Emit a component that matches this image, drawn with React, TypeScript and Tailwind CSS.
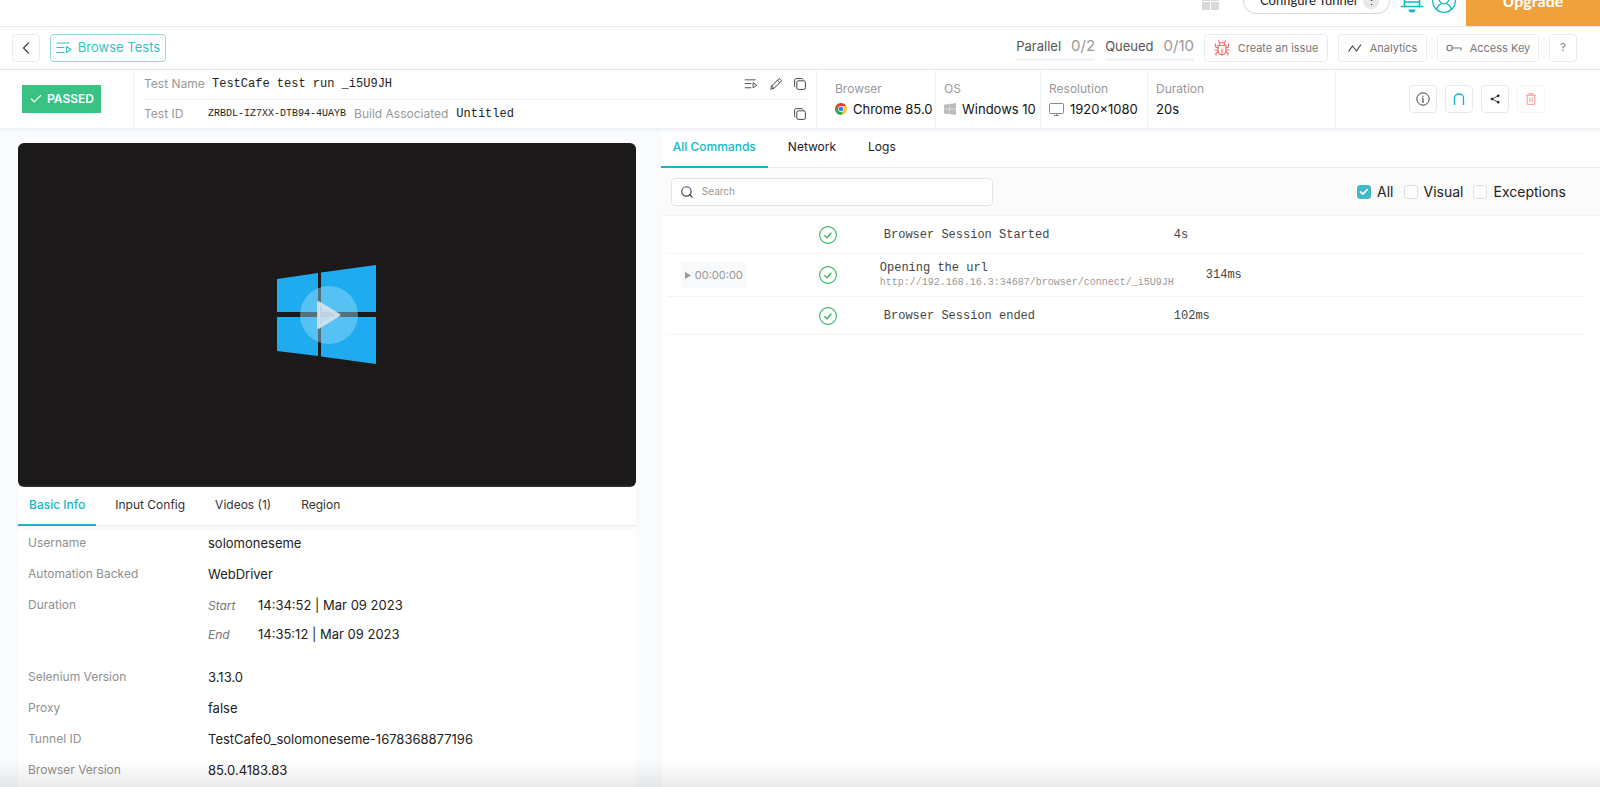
import React, { useState } from "react";
import { clsx } from "clsx";
import { Check, ChevronLeft, Search } from "lucide-react";

const INFO_TABS = ["Basic Info", "Input Config", "Videos (1)", "Region"];
const COMMAND_TABS = ["All Commands", "Network", "Logs"];

interface Command {
  title: string;
  duration: string;
  url?: string;
  time?: string;
}

const COMMANDS: Command[] = [
  { title: "Browser Session Started", duration: "4s" },
  {
    title: "Opening the url",
    url: "http://192.168.16.3:34687/browser/connect/_i5U9JH",
    time: "00:00:00",
    duration: "314ms",
  },
  { title: "Browser Session ended", duration: "102ms" },
];

const PlaylistIcon = ({ className }: { className?: string }) => (
  <svg viewBox="0 0 16 12" className={className} fill="none" stroke="currentColor" strokeWidth="1.1">
    <path d="M.5 1h13M.5 5.5h8M.5 10.5h8" />
    <path d="M10.5 4.5l4.5 3-4.5 3z" strokeLinejoin="round" />
  </svg>
);

const CopyIcon = () => (
  <svg viewBox="0 0 12 12" className="size-3" fill="none" stroke="currentColor" strokeWidth="1">
    <rect x="2.8" y="2.8" width="8.6" height="8.6" rx="1.6" />
    <path d="M1.4 9.2C.8 8.8.6 8.4.6 7.700V2.200C.6 1.200 1.200.6 2.200.6h5.500c.7 0 1.100.2 1.500.8" />
  </svg>
);

const PencilIcon = () => (
  <svg viewBox="0 0 12 12" className="size-3" fill="none" stroke="currentColor" strokeWidth="1" strokeLinejoin="round">
    <path d="M.8 11.200l.8-3.200L8.700.9c.4-.4 1-.4 1.400 0l1 1c.4.4.4 1 0 1.400L4 10.400z" />
    <path d="M7.400 2.200l2.400 2.400M1.600 8L4 10.400" />
  </svg>
);

const WindowsLogo = ({ className }: { className?: string }) => (
  <svg viewBox="0 0 99 99" className={className} fill="currentColor">
    <path d="M0 14L41 8v39H0zM44 7.500L99 0v47H44zM0 52h41v39L0 86zM44 52h55v47l-55-7.500z" />
  </svg>
);

const ChromeLogo = () => (
  <svg viewBox="0 0 24 24" className="size-3 shrink-0">
    <path d="M12 12L1.600 6A12 12 0 0 1 22.400 6z" fill="#e33b2e" />
    <path d="M12 12L22.400 6A12 12 0 0 1 12 24z" fill="#fcc934" />
    <path d="M12 12v12A12 12 0 0 1 1.600 6z" fill="#2da94f" />
    <path d="M12 6h10.400l-5.200 9z" fill="#fcc934" />
    <path d="M17.200 15L12 24l-5.200-9z" fill="#2da94f" />
    <path d="M6.800 15L1.600 6H12z" fill="#e33b2e" />
    <circle cx="12" cy="12" r="5.800" fill="#fff" />
    <circle cx="12" cy="12" r="4.600" fill="#3b7ded" />
  </svg>
);

const MonitorIcon = () => (
  <svg viewBox="0 0 15 13" className="h-[13px] w-[15px] shrink-0" fill="none" stroke="#888" strokeWidth="1">
    <rect x=".5" y=".5" width="14" height="10" rx="1" />
    <path d="M5 12.500h5M7.500 10.500v2" />
  </svg>
);

const BugIcon = () => (
  <svg viewBox="0 0 16 16" className="size-4" fill="none" stroke="#f4706c" strokeWidth="1.200" strokeLinecap="round">
    <path d="M4 5.500h8v5.300a4 4 0 0 1-8 0zM5.200 5.300a2.800 2.800 0 0 1 5.600 0M8 9v5.500" />
    <path d="M5.500 2.500L4.500 1M10.500 2.500l1-1.500M4 7.500H2L1.200 4M12 7.500h2l.8-3.500M4 10H.8M12 10h3.200M4.300 12L2 13v2M11.700 12l2.300 1v2" />
  </svg>
);

const KeyIcon = () => (
  <svg viewBox="0 0 16 8" className="h-2 w-4" fill="none" stroke="currentColor" strokeWidth="1.100">
    <circle cx="3.600" cy="4" r="2.700" />
    <path d="M6.300 4h8.700v2.500" />
  </svg>
);

const BellIcon = () => (
  <svg viewBox="0 0 24 24" className="size-6" fill="none" stroke="#12b7c4" strokeWidth="1.600">
    <path d="M4.500 17V9a7.500 7.500 0 0 1 15 0v8M5 13h14M1 17.500h22" />
    <path d="M8.500 20.500h7a3.500 3 0 0 1-7 0z" fill="#12b7c4" stroke="none" />
  </svg>
);

const AvatarIcon = () => (
  <svg viewBox="0 0 24 24" className="size-6" fill="none" stroke="#12b7c4" strokeWidth="1.300">
    <circle cx="12" cy="12" r="11.300" />
    <circle cx="12" cy="10" r="4.800" />
    <path d="M4.500 20.500c1-3.500 3.200-5.200 5-6M19.500 20.500c-1-3.500-3.200-5.200-5-6" />
  </svg>
);

const TopBar = () => (
  <header className="flex h-[27px] shrink-0 items-end overflow-hidden border-b border-[#e8e8e8]">
    <div className="flex h-[50px] flex-1 items-center justify-end">
      <div className="mr-6 grid grid-cols-2 gap-px">
        <span className="size-2 bg-[#d8d8d8]" />
        <span className="size-2 bg-[#d8d8d8]" />
        <span className="size-2 bg-[#d8d8d8]" />
        <span className="size-2 bg-[#d8d8d8]" />
      </div>
      <button className="mr-2.5 flex h-[26px] w-[147px] items-center justify-between rounded-full border border-[#d5d5d5] pr-2.5 pl-4 font-[Lato,sans-serif] text-[13px] text-[#222]">
        Configure Tunnel
        <span className="flex size-4 items-center justify-center rounded-full bg-[#e8e8e8] text-[11px]">⋮</span>
      </button>
      <button aria-label="Notifications" className="mr-2"><BellIcon /></button>
      <button aria-label="Account" className="mr-2.5"><AvatarIcon /></button>
      <button className="h-full w-[134px] bg-[#f0a13c] font-[Lato,sans-serif] text-base font-bold text-white">Upgrade</button>
    </div>
  </header>
);

const Quota = ({ label, value }: { label: string; value: string }) => (
  <div className="flex h-[26px] items-center gap-2.5 border-b-3 border-[#f1f4f9] text-[13px] text-[#555]">
    {label}
    <span className="text-[15px] text-[#999]">{value}</span>
  </div>
);

const ToolButton = ({ className, children }: { className?: string; children: React.ReactNode }) => (
  <button
    className={clsx(
      "flex h-7 items-center justify-center gap-2 rounded border border-[#e6ecf5] text-[11px] text-[#777]",
      className,
    )}
  >
    {children}
  </button>
);

const Toolbar = () => (
  <nav className="flex h-[43px] shrink-0 items-center border-b border-[#e6e6e6] pr-[23px] pl-3">
    <button aria-label="Back" className="flex size-7 items-center justify-center rounded border border-[#e6ecf5] text-[#444]">
      <ChevronLeft className="size-5" strokeWidth={1.5} />
    </button>
    <a
      href="#tests"
      className="ml-2.5 flex h-7 w-[116px] items-center justify-center gap-1.5 rounded border border-[#8fdbe1] text-[13px] text-[#36bfca]"
    >
      <PlaylistIcon className="h-3 w-4" />
      Browse Tests
    </a>
    <div className="ml-auto flex items-center gap-2.5">
      <Quota label="Parallel" value="0/2" />
      <Quota label="Queued" value="0/10" />
      <ToolButton className="w-[124px]">
        <BugIcon />
        Create an issue
      </ToolButton>
      <ToolButton className="w-[89px]">
        <svg viewBox="0 0 14 10" className="h-2.5 w-3.5 text-[#444]" fill="none" stroke="currentColor" strokeWidth="1.200">
          <path d="M.5 8.500L4.500 3l4 5L13 1.500" strokeLinejoin="round" />
        </svg>
        Analytics
      </ToolButton>
      <ToolButton className="w-[102px]">
        <KeyIcon />
        Access Key
      </ToolButton>
      <ToolButton className="w-7 text-sm">?</ToolButton>
    </div>
  </nav>
);

const Spec = ({ label, className, children }: { label: string; className?: string; children: React.ReactNode }) => (
  <div className={clsx("flex shrink-0 flex-col justify-center gap-1 border-r border-[#eef2f8] pl-2", className)}>
    <span className="text-xs leading-4 text-[#999]">{label}</span>
    <span className="flex items-center gap-1.5 text-[13px] leading-4 text-[#111]">{children}</span>
  </div>
);

const IconButton = ({ label, danger, children }: { label: string; danger?: boolean; children: React.ReactNode }) => (
  <button
    aria-label={label}
    className={clsx(
      "flex size-7 items-center justify-center rounded border",
      danger ? "border-[#fdf1f0] text-[#fba9a6]" : "border-[#e4eaf3] text-[#444]",
    )}
  >
    {children}
  </button>
);

const TestSummary = () => (
  <section className="relative z-10 flex h-[58px] shrink-0 bg-white shadow-[0_2px_4px_#e9eef4]">
    <div className="flex w-[134px] shrink-0 items-center border-r border-[#eef2f8] pl-[22px]">
      <span className="flex h-7 w-[79px] items-center justify-center gap-1 bg-[#3ac184] text-xs font-semibold text-white">
        <Check className="size-3.5" strokeWidth={2} />
        PASSED
      </span>
    </div>
    <div className="flex min-w-0 flex-1 flex-col border-r border-[#eef2f8] pr-2.5 pl-2.5 text-xs text-[#999]">
      <div className="flex flex-1 items-center border-b border-[#eef1f5]">
        <span className="w-[68px]">Test Name</span>
        <span className="font-['Liberation_Mono',monospace] text-[#222]">TestCafe test run _i5U9JH</span>
        <div className="ml-auto flex items-center gap-3 text-[#444]">
          <button aria-label="Add to list"><PlaylistIcon className="h-2.5 w-3.5" /></button>
          <button aria-label="Rename"><PencilIcon /></button>
          <button aria-label="Copy name"><CopyIcon /></button>
        </div>
      </div>
      <div className="flex flex-1 items-center">
        <span className="w-16">Test ID</span>
        <span className="font-['Liberation_Mono',monospace] text-[10px] text-[#222]">ZRBDL-IZ7XX-DTB94-4UAYB</span>
        <span className="ml-2">Build Associated</span>
        <span className="ml-2 font-['Liberation_Mono',monospace] text-[#222]">Untitled</span>
        <button aria-label="Copy ID" className="ml-auto text-[#444]"><CopyIcon /></button>
      </div>
    </div>
    <Spec label="Browser" className="w-[119px] pl-[18px]">
      <ChromeLogo />
      Chrome 85.0
    </Spec>
    <Spec label="OS" className="w-[105px]">
      <WindowsLogo className="size-3 shrink-0 text-[#bbb]" />
      Windows 10
    </Spec>
    <Spec label="Resolution" className="w-[107px]">
      <MonitorIcon />
      1920×1080
    </Spec>
    <Spec label="Duration" className="w-[188px]">20s</Spec>
    <div className="flex w-[264px] shrink-0 items-center justify-end gap-2 pr-[55px]">
      <IconButton label="Details">
        <svg viewBox="0 0 14 14" className="size-3.5" fill="none" stroke="currentColor">
          <circle cx="7" cy="7" r="6.200" />
          <path d="M7 6v4M7 3.700v1.200M6 6h1M6 10h2" />
        </svg>
      </IconButton>
      <IconButton label="Tunnel">
        <svg viewBox="0 0 12 12" className="size-3 text-[#12b7c4]" fill="none" stroke="currentColor" strokeWidth="1.300">
          <path d="M1.500 12V5a4 4 0 0 1 4-4h1a4 4 0 0 1 4 4v7" />
        </svg>
      </IconButton>
      <IconButton label="Share">
        <svg viewBox="0 0 10 10" className="size-2.5" fill="#222" stroke="#222" strokeWidth=".8">
          <path d="M8.200 1.800L2 5l6.200 3.200" fill="none" />
          <circle cx="8.200" cy="1.800" r="1" />
          <circle cx="2" cy="5" r="1" />
          <circle cx="8.200" cy="8.200" r="1" />
        </svg>
      </IconButton>
      <IconButton label="Delete" danger>
        <svg viewBox="0 0 10 12" className="h-3 w-2.5" fill="none" stroke="currentColor" strokeWidth="1.200">
          <path d="M0 2.300h10M3.200 2V.7h3.600V2M1.200 2.300v8.200c0 .6.300.9.900.9h5.800c.6 0 .9-.3.900-.9V2.300M3.800 4.500v4.500M6.200 4.500v4.500" />
        </svg>
      </IconButton>
    </div>
  </section>
);

const InfoRow = ({ label, children }: { label: string; children: React.ReactNode }) => (
  <div className="flex">
    <dt className="w-[180px] shrink-0 text-xs leading-[18px] text-[#909090]">{label}</dt>
    <dd className="text-[13px] leading-[19px] text-[#222]">{children}</dd>
  </div>
);

const SessionPanel = () => {
  const [tab, setTab] = useState(INFO_TABS[0]);

  return (
    <aside className="flex w-[41.3%] shrink-0 flex-col bg-[#f9fbfe] pt-[15px] pr-[25px] pl-[18px]">
      <div className="flex aspect-[618/344] items-center justify-center rounded-md bg-[#1b1919]">
        <div className="grid place-items-center *:col-start-1 *:row-start-1">
          <WindowsLogo className="size-[99px] text-[#1eabf0]" />
          <button aria-label="Play video" className="z-10 ml-1 flex size-[58px] items-center justify-center rounded-full bg-[#9cdcf7]/45">
            <svg viewBox="0 0 26 30" className="h-[30px] w-[26px]">
              <path d="M2.500 2.500v25L23 15z" fill="#d4e4ee" fillOpacity=".85" stroke="#d4e4ee" strokeOpacity=".85" strokeWidth="3" strokeLinejoin="round" />
            </svg>
          </button>
        </div>
      </div>
      <div className="flex-1 bg-white">
        <div className="flex h-[39px] border-b border-[#eceff2] shadow-[0_2px_4px_#f3f3f3]">
          {INFO_TABS.map((name) => (
            <button
              key={name}
              onClick={() => setTab(name)}
              className={clsx(
                "mr-2 -mb-px border-b-2 px-[11px] text-xs",
                tab === name ? "border-[#12b7c4] font-medium text-[#12b7c4]" : "border-transparent text-[#333]",
              )}
            >
              {name}
            </button>
          ))}
        </div>
        <dl className="flex flex-col gap-3 px-2.5 pt-2">
          <InfoRow label="Username">solomoneseme</InfoRow>
          <InfoRow label="Automation Backed">WebDriver</InfoRow>
          <InfoRow label="Duration">
            <div className="flex">
              <i className="w-[50px] text-xs leading-[19px] text-[#777]">Start</i>14:34:52 | Mar 09 2023
            </div>
            <div className="mt-2.5 mb-3 flex">
              <i className="w-[50px] text-xs leading-[19px] text-[#777]">End</i>14:35:12 | Mar 09 2023
            </div>
          </InfoRow>
          <InfoRow label="Selenium Version">3.13.0</InfoRow>
          <InfoRow label="Proxy">false</InfoRow>
          <InfoRow label="Tunnel ID">TestCafe0_solomoneseme-1678368877196</InfoRow>
          <InfoRow label="Browser Version">85.0.4183.83</InfoRow>
        </dl>
      </div>
    </aside>
  );
};

const FilterCheckbox = ({ label, defaultChecked }: { label: string; defaultChecked?: boolean }) => (
  <label className="flex items-center gap-1.5 text-sm text-[#222]">
    <span className="grid place-items-center *:col-start-1 *:row-start-1">
      <input
        type="checkbox"
        defaultChecked={defaultChecked}
        className="peer size-3.5 appearance-none rounded-[3px] border border-[#dedede] bg-white checked:border-[#41b9c7] checked:bg-[#41b9c7]"
      />
      <Check className="pointer-events-none invisible z-10 size-2.5 text-white peer-checked:visible" strokeWidth={4} />
    </span>
    {label}
  </label>
);

const CommandRow = ({ command }: { command: Command }) => (
  <li className={clsx("flex items-center border-b border-[#f0f4f8]", command.url ? "h-[43px]" : "h-[38px]")}>
    <div className="w-[152px] shrink-0 pl-3.5">
      {command.time && (
        <button className="flex h-[26px] w-[66px] items-center justify-center gap-1 rounded bg-[#f8f9fb] text-[11px] text-[#999]">
          <svg viewBox="0 0 6 7" className="h-[7px] w-1.5 shrink-0" fill="currentColor">
            <path d="M0 0l6 3.500L0 7z" />
          </svg>
          {command.time}
        </button>
      )}
    </div>
    <svg viewBox="0 0 18 18" className="size-[18px] shrink-0" fill="none" stroke="#35b560">
      <circle cx="9" cy="9" r="8.400" strokeWidth="1.100" />
      <path d="M5.500 9.300l2.500 2.400 4.300-5" strokeWidth="1.500" />
    </svg>
    <div
      className={clsx(
        "shrink-0 font-['Liberation_Mono',monospace] text-xs text-[#444]",
        command.url ? "ml-[43px] w-[326px]" : "ml-[47px] w-[290px]",
      )}
    >
      {command.title}
      {command.url && <p className="text-[10px] text-[#999]">{command.url}</p>}
    </div>
    <span className="font-['Liberation_Mono',monospace] text-xs text-[#444]">{command.duration}</span>
  </li>
);

const CommandsPanel = () => {
  const [tab, setTab] = useState(COMMAND_TABS[0]);

  return (
    <main className="min-w-0 flex-1">
      <div className="flex h-10 border-b border-[#ebebeb]">
        {COMMAND_TABS.map((name) => (
          <button
            key={name}
            onClick={() => setTab(name)}
            className={clsx(
              "mr-2 -mb-px border-b-2 px-3 text-xs",
              tab === name ? "border-[#12b7c4] font-medium text-[#12b7c4]" : "border-transparent text-[#222]",
            )}
          >
            {name}
          </button>
        ))}
      </div>
      <div className="flex h-12 items-center border-b border-[#f5f5f5] bg-[#fbfbfb] pr-[34px] pl-2.5">
        <label className="flex h-7 w-[322px] items-center gap-2 rounded border border-[#e4e4e4] bg-white px-2 text-[#444]">
          <Search className="size-3.5" strokeWidth={2} />
          <input
            type="search"
            aria-label="Search"
            placeholder="Search"
            className="min-w-0 flex-1 text-[10px] outline-none placeholder:text-[#999]"
          />
        </label>
        <div className="ml-auto flex gap-2.5">
          <FilterCheckbox label="All" defaultChecked />
          <FilterCheckbox label="Visual" />
          <FilterCheckbox label="Exceptions" />
        </div>
      </div>
      <ul className="mr-3.5 ml-1.5">
        {COMMANDS.map((command) => (
          <CommandRow key={command.title} command={command} />
        ))}
      </ul>
    </main>
  );
};

export default function App() {
  return (
    <div className="flex min-h-screen flex-col bg-white font-[Inter,sans-serif]">
      <TopBar />
      <Toolbar />
      <TestSummary />
      <div className="flex flex-1">
        <SessionPanel />
        <CommandsPanel />
      </div>
      <div className="pointer-events-none fixed inset-x-0 bottom-0 z-20 h-7 bg-linear-to-t from-black/8 to-transparent" />
    </div>
  );
}
